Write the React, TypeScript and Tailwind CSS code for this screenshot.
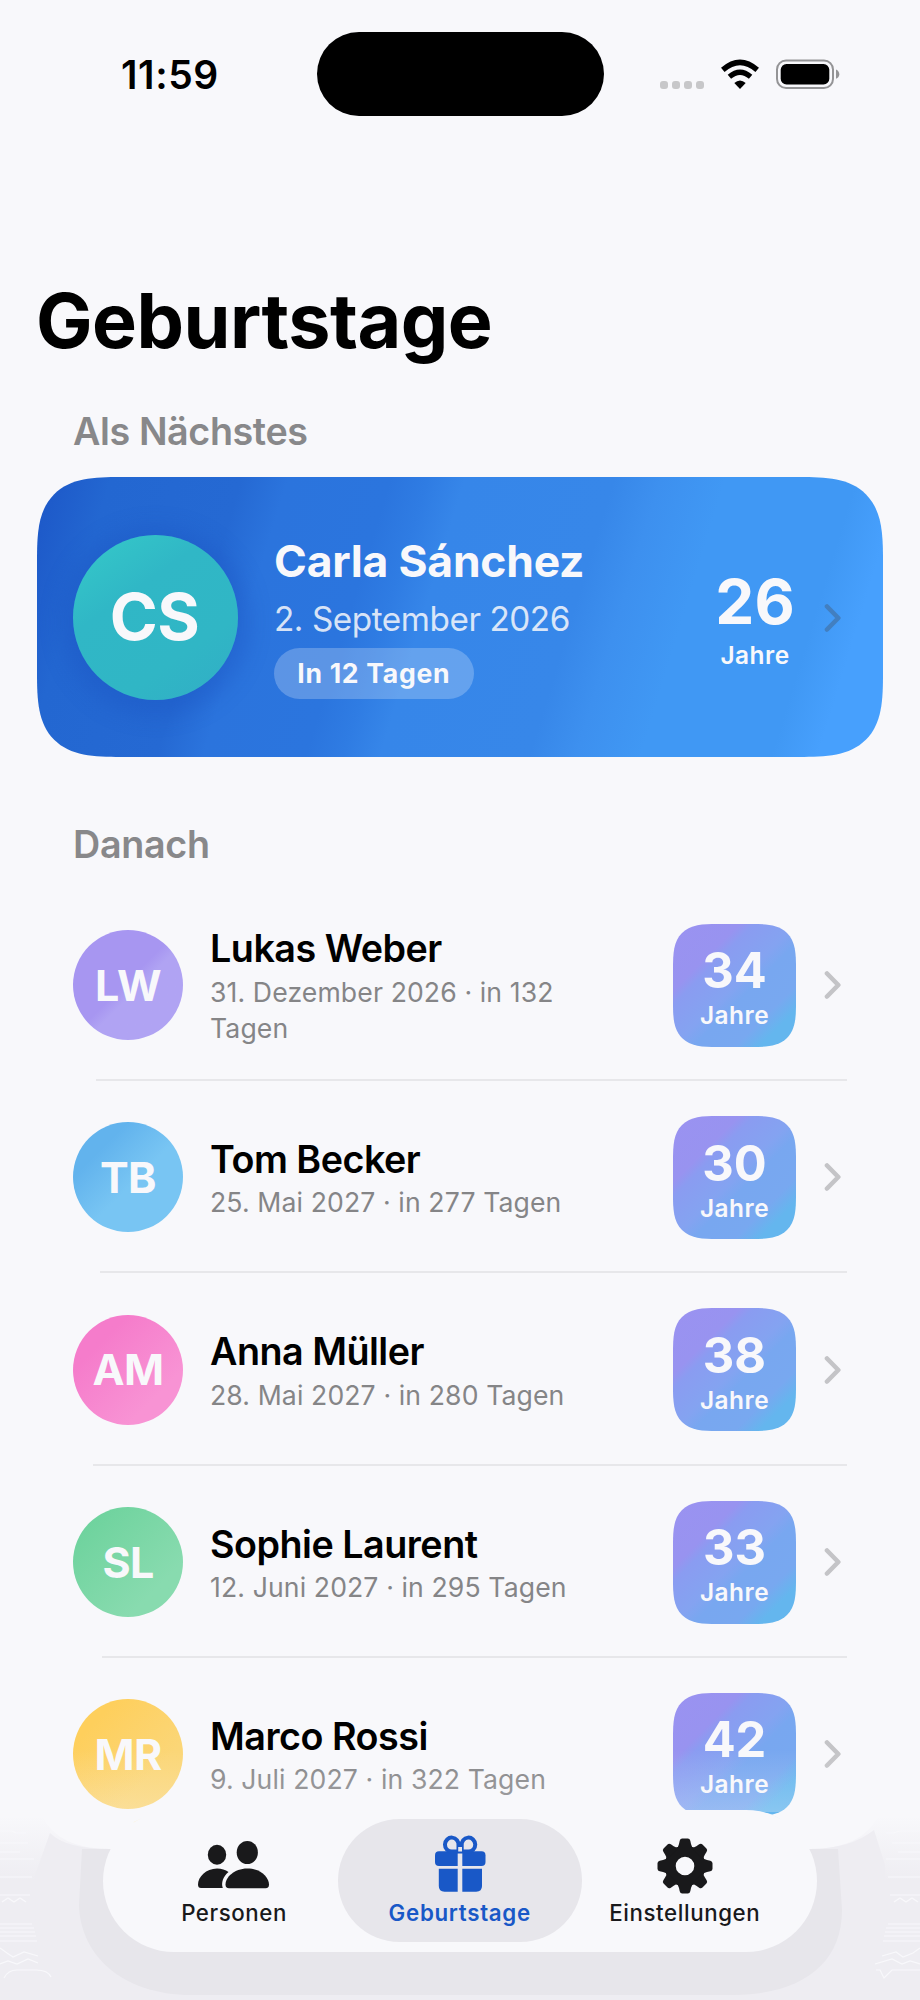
import React from 'react';

interface Person {
  initials: string;
  name: string;
  date: string;
  age: number;
  avatar: string;
  divider: string;
}

const people: Person[] = [
  { initials: 'LW', name: 'Lukas Weber', date: '31. Dezember 2026 · in 132 Tagen', age: 34, avatar: 'from-[#a796f1] from-48% to-[#b0a3f3] to-56%', divider: 'ml-[96px]' },
  { initials: 'TB', name: 'Tom Becker', date: '25. Mai 2027 · in 277 Tagen', age: 30, avatar: 'from-[#62b3ed] from-25% to-[#78c5f3] to-55%', divider: 'ml-[100px]' },
  { initials: 'AM', name: 'Anna Müller', date: '28. Mai 2027 · in 280 Tagen', age: 38, avatar: 'from-[#f57ccb] from-25% to-[#f893d4] to-75%', divider: 'ml-[93px]' },
  { initials: 'SL', name: 'Sophie Laurent', date: '12. Juni 2027 · in 295 Tagen', age: 33, avatar: 'from-[#6fd39e] from-15% to-[#88dbaf] to-75%', divider: 'ml-[102px]' },
  { initials: 'MR', name: 'Marco Rossi', date: '9. Juli 2027 · in 322 Tagen', age: 42, avatar: 'from-[#fecf5c] from-20% to-[#fbd677] to-70%', divider: 'invisible' },
];

function Chevron({ className }: { className: string }) {
  return (
    <svg viewBox="0 0 17 28" className={`h-7 w-[17px] shrink-0 ${className}`} fill="none" stroke="currentColor" strokeWidth="4.6" strokeLinecap="round" strokeLinejoin="round">
      <path d="M3 2.500 L14.300 14 L3 25.500" />
    </svg>
  );
}

function StatusBar() {
  return (
    <header className="flex h-[116px] pt-8">
      <div className="w-[316.5px] pl-[121px] text-[39px] leading-[86px] font-semibold tracking-[0.6px]">11:59</div>
      <div className="h-[84px] w-[287px] rounded-full bg-black" />
      <div className="flex items-start pt-[27px] pl-[56px]">
        <div className="flex gap-[4.2px] pt-[22px]">
          {[0, 1, 2, 3].map((i) => (
            <div key={i} className="size-[8px] rounded-[3px] bg-[#c7c7c9]" />
          ))}
        </div>
        <svg viewBox="0 0 40 30" className="ml-[16px] h-[30px] w-10">
          <path d="M20 30 L14.3 24.1 Q20 18.8 25.7 24.1 Z" />
          <path d="M9.4 17.8 Q20 8.7 30.6 17.8" fill="none" stroke="#000" strokeWidth="5.2" />
          <path d="M2.8 10.9 Q20 -4.2 37.2 10.9" fill="none" stroke="#000" strokeWidth="5.4" />
        </svg>
        <svg viewBox="0 0 64 30" className="ml-[16px] h-[30px] w-16">
          <rect x="1" y="1.5" width="56" height="27.5" rx="9" fill="none" stroke="#949496" strokeWidth="2" />
          <rect x="4.7" y="5" width="48.6" height="20.5" rx="5.8" />
          <path d="M60 10.5 Q63.3 12 63.3 15.2 Q63.3 18.4 60 19.8 Z" fill="#949496" />
        </svg>
      </div>
    </header>
  );
}

function NextCard() {
  return (
    <section className="mx-[37px] mt-[21.5px] flex h-[280px] rounded-[58px] bg-[linear-gradient(107deg,#1c56c7_0%,#2367d1_8%,#2569d3_22%,#2b74dd_27%,#2b75de_38%,#2f7ce3_42%,#3686e9_46%,#3787e9_62%,#3d90ef_67%,#4098f4_74%,#4098f4_88%,#47a0fd_93%)] text-[#f8f8fb] [corner-shape:superellipse(1.6)] supports-[corner-shape:squircle]:rounded-[84px]">
      <div className="mt-[58px] ml-[36px] flex size-[165px] items-center justify-center rounded-full bg-[linear-gradient(145deg,#34c5c8_10%,#30b7c6_35%,#30b6c5_70%,#31adc6)] pr-[2px] text-[65px] font-bold tracking-[-0.5px] shadow-[0_4px_20px_12px_rgba(28,85,195,0.4)]">
        CS
      </div>
      <div className="ml-[36px] flex w-[431px] flex-col items-start pt-[57px]">
        <h2 className="text-[44.4px] leading-[54px] font-bold tracking-[-0.2px] whitespace-nowrap">Carla Sánchez</h2>
        <p className="mt-[10.4px] text-[33.3px] leading-[42px] tracking-[-0.45px] whitespace-nowrap text-[#f8f8fb]/85">2. September 2026</p>
        <span className="mt-[8.6px] flex h-[51px] w-[199.5px] items-center justify-center rounded-full bg-white/23 text-[26.6px] font-bold tracking-[0.7px] whitespace-nowrap">In 12 Tagen</span>
      </div>
      <div className="flex w-[100px] flex-col items-center pt-[88px]">
        <span className="text-[62px] leading-[74px] font-bold">26</span>
        <span className="mt-[1px] text-[24.4px] leading-[30px] font-semibold tracking-[0.5px]">Jahre</span>
      </div>
      <Chevron className="mt-[127px] ml-[18.5px] text-[#427fc0]" />
    </section>
  );
}

function PersonRow({ person }: { person: Person }) {
  return (
    <li className="flex h-[192.3px] flex-col">
      <div className="flex flex-1 items-center pt-[2.6px] pl-[73px]">
        <div className={`flex size-[110px] shrink-0 items-center justify-center rounded-full bg-linear-to-br text-[43px] font-bold tracking-[-0.7px] text-[#f8f8fb] ${person.avatar}`}>
          {person.initials}
        </div>
        <div className="ml-[27px] w-[371px] pt-[2px]">
          <h3 className="text-[37.7px] leading-[46px] font-semibold tracking-[-0.5px] whitespace-nowrap text-black">{person.name}</h3>
          <p className="mt-[2.4px] text-[26.6px] leading-[36.6px] tracking-[0.12px] text-[#858587]">{person.date}</p>
        </div>
        <div className="ml-[92px] flex size-[123px] shrink-0 flex-col items-center rounded-[32px] bg-[linear-gradient(135deg,#9a92f1_0%,#9893f0_27%,#8a9cf1_33%,#84a3f1_50%,#78a7f0_58%,#78a8f0_75%,#64b6ee_85%)] pt-[19.6px] text-[#f8f8fb] [corner-shape:superellipse(1.6)] supports-[corner-shape:squircle]:rounded-[44px]">
          <span className="text-[48.8px] leading-[56px] font-bold">{person.age}</span>
          <span className="mt-[1px] text-[24.4px] leading-[30px] font-semibold tracking-[0.5px]">Jahre</span>
        </div>
        <Chevron className="ml-[28px] text-[#c4c4c7]" />
      </div>
      <div className={`mr-[73px] h-[2px] bg-[#e7e7ea] ${person.divider}`} />
    </li>
  );
}

// Soft shade and glow that the floating tab bar casts over the list
function BarShade() {
  return (
    <svg viewBox="0 0 920 260" className="absolute inset-0 h-[260px] w-[920px]">
      <defs>
        <linearGradient id="fade" x1="0" y1="0" x2="0" y2="1">
          <stop offset="0" stopColor="#f8f8fb" stopOpacity="0" />
          <stop offset="1" stopColor="#f8f8fb" stopOpacity="0.25" />
        </linearGradient>
        <linearGradient id="base" x1="0" y1="0" x2="0" y2="1">
          <stop offset="0" stopColor="#f8f8fb" />
          <stop offset="0.35" stopColor="#eeedf2" />
        </linearGradient>
      </defs>
      <rect y="10" width="920" height="62" fill="url(#fade)" />
      <path d="M0 76 H42 Q58 109 110 109 H810 Q862 109 878 76 H920 V260 H0 Z" fill="url(#base)" />
      <path d="M50 93 Q66 109 110 109 H810 Q850 109 874 90 L885 125 L888 220 L850 245 H70 L36 220 L35 135 Z" fill="#eeedf2" />
      <path d="M82 109 H838 L842 170 C842 225 800 254 735 255 H185 C115 252 80 210 79 165 Z" fill="#e7e6eb" />
      <path d="M130 70 H683 L735 70.5 Q757 71 773 75 L810 109 H110 Z" fill="#f8f8fb" />
      <path d="M134 83 Q148 76 168 72" fill="none" stroke="#fbf3da" strokeWidth="2" />
      <path d="M758 72.5 Q772 75 780 80" fill="none" stroke="#e3f1fa" strokeWidth="2" />
      <g stroke="#f8f8fb" strokeWidth="1.2" fill="none">
        <path d="M0 91 H12 L16 93 H26 M0 103 H28 M0 112 H20 M0 119 H34 M0 137 H32 M0 155 H30 M2 162 L8 158 L14 162 L20 158 L26 162 M0 184 H32 M0 188 H34 M0 192 H35 M0 196 H36 M0 201 H37 M0 208 L7 213 L13 217 L24 212 L38 216 M0 224 L8 221 L17 224 L28 219 L38 223 M4 238 Q8 230 17 230 H36 Q48 230 51 237" />
        <path d="M920 91 H900 L893 93 H886 M920 103 H892 M920 112 H898 M920 119 H886 M920 137 H888 M920 155 H890 M918 162 L912 158 L906 162 L900 158 L894 162 M920 184 H888 M920 188 H886 M920 192 H885 M920 196 H884 M920 201 H883 M920 208 L913 213 L903 217 L896 212 L882 216 M920 224 L910 221 L902 224 L892 219 L875 224 M920 230 H892 L884 238 L880 230 H876" />
      </g>
    </svg>
  );
}

function PeopleIcon() {
  return (
    <svg viewBox="198 60 74 54" className="h-[54px] w-[74px]" fill="#19191b">
      <ellipse cx="218" cy="74.7" rx="9.2" ry="10" />
      <ellipse cx="248.3" cy="72.5" rx="10.6" ry="11.6" />
      <path d="M202 108 Q199 108 199 104.5 C199 97 207 88.5 218 88.5 C222.5 88.5 226.5 90 229.5 92 C224 96.5 222 103 223.800 108 Z" />
      <path d="M230 108.3 Q226.5 108.3 226.5 104.5 C226.5 97.5 235 88.5 248.3 88.5 C261.5 88.5 270 97.5 270 104.5 Q270 108.3 266.5 108.3 Z" />
    </svg>
  );
}

function GiftIcon() {
  return (
    <svg viewBox="0 0 54 58" className="h-[58px] w-[54px]" fill="#1958c7">
      <path d="M6 16.3 H24.7 V31 H6 Q2 31 2 27 V20.3 Q2 16.3 6 16.3 Z" />
      <path d="M29.3 16.3 H48.5 Q52.5 16.3 52.5 20.3 V27 Q52.5 31 48.5 31 H29.3 Z" />
      <path d="M5.8 33.8 H24.7 V56.7 H11.5 Q5.8 56.7 5.8 51 Z" />
      <path d="M29.3 33.8 H49 V51 Q49 56.7 43.2 56.7 H29.3 Z" />
      <path d="M25.5 16.6 H19 A6.8 7 0 1 1 25.5 10.5 Z M28.7 16.6 H35.2 A6.8 7 0 1 0 28.7 10.5 Z" fill="#e7e6eb" stroke="#1958c7" strokeWidth="4" />
      <path d="M25.2 12 H29 V16.5 H25.2 Z" fill="#e7e6eb" />
    </svg>
  );
}

function GearIcon() {
  return (
    <svg viewBox="-28 -28 56 56" className="size-14" fill="#19191b">
      <circle r="14.8" fill="none" stroke="#19191b" strokeWidth="11" />
      {[0, 45, 90, 135, 180, 225, 270, 315].map((deg) => (
        <path key={deg} transform={`rotate(${deg})`} d="M-9 -17 Q-6.5 -19 -6 -22 L-5.3 -25.3 Q-4.8 -27.5 -2.8 -27.5 H2.8 Q4.8 -27.5 5.3 -25.3 L6 -22 Q6.5 -19 9 -17 Z" />
      ))}
    </svg>
  );
}

function TabBar() {
  return (
    <nav className="absolute top-[69.5px] left-[103px] flex h-[142.5px] w-[714px] items-center rounded-full bg-[#f8f8fb] text-[22.3px] leading-7 font-medium text-[#19191b]">
      <div className="flex h-[123px] w-[235px] flex-col items-center pt-[21px] pl-[27px]">
        <PeopleIcon />
        <span className="mt-[5px] tracking-[0.55px]">Personen</span>
      </div>
      <div className="flex h-[123px] w-[243.5px] flex-col items-center rounded-full bg-[#e7e6eb] pt-[16px] text-[#1958c7]">
        <GiftIcon />
        <span className="mt-[6px] font-semibold tracking-[0.7px]">Geburtstage</span>
      </div>
      <div className="flex h-[123px] flex-1 flex-col items-center pt-[18.5px] pr-[29px]">
        <GearIcon />
        <span className="mt-[5.5px] tracking-[0.6px]">Einstellungen</span>
      </div>
    </nav>
  );
}

export default function App() {
  return (
    <div className="relative h-[2000px] w-[920px] overflow-hidden bg-[#f8f8fb] font-['Inter',sans-serif] text-black">
      <StatusBar />
      <h1 className="mt-[160px] pl-[36px] text-[75.4px] leading-[90px] font-bold tracking-[-0.5px]">Geburtstage</h1>
      <h2 className="mt-[41px] pl-[73px] text-[37.7px] leading-[48px] font-semibold tracking-[-0.4px] text-[#88888a]">Als Nächstes</h2>
      <NextCard />
      <h2 className="mt-[63.5px] pl-[73px] text-[37.7px] leading-[48px] font-semibold tracking-[-0.3px] text-[#88888a]">Danach</h2>
      <ul className="mt-[20.7px]">
        {people.map((person) => (
          <PersonRow key={person.name} person={person} />
        ))}
      </ul>
      <div className="absolute bottom-0 left-0 h-[260px] w-[920px]">
        <BarShade />
        <TabBar />
      </div>
    </div>
  );
}
